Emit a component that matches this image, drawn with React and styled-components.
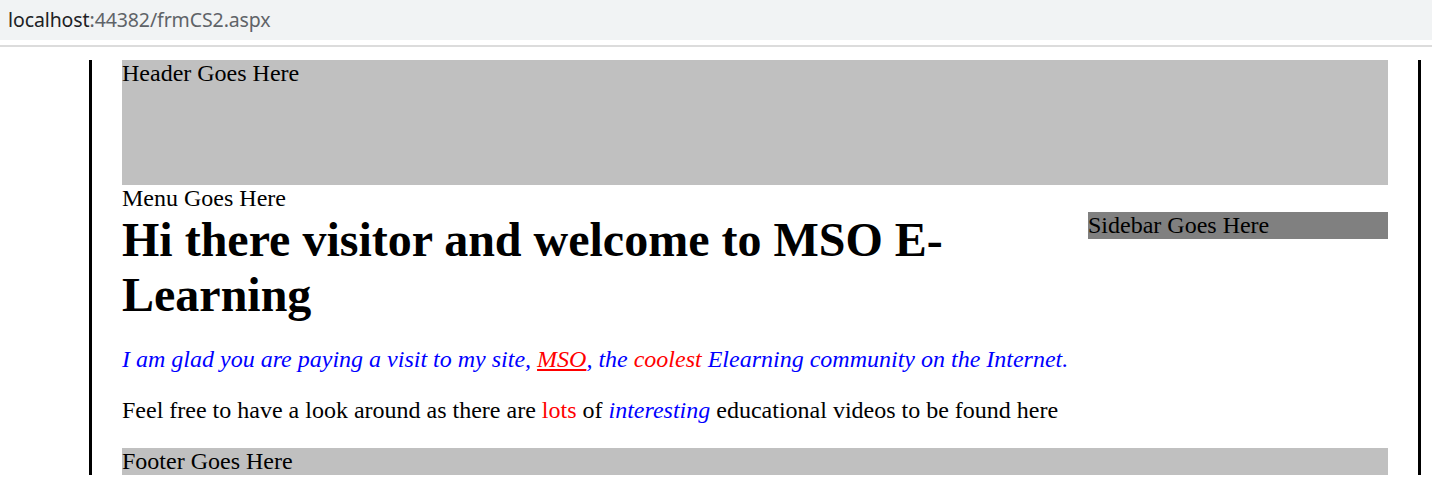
import React from "react";
import styled, { createGlobalStyle } from "styled-components";

const Global = createGlobalStyle`
  html, body { margin: 0; padding: 0; background: #ffffff; }
  body { font-family: "Liberation Serif", "Times New Roman", serif; font-size: 24px; color: #000; }
`;

const AddressBar = styled.div`
  height: 40px;
  background: #f1f3f4;
  display: flex;
  align-items: center;
  padding-left: 8px;
  padding-bottom: 1px;
  box-sizing: border-box;
  font-family: "Noto Sans", "Open Sans", sans-serif;
  font-size: 19.5px;
  letter-spacing: -0.1px;
  color: #202124;
`;

const UrlRest = styled.span`
  color: #5f6368;
`;

const BarRule = styled.div`
  margin-top: 5px;
  height: 2px;
  background: #dcdcdc;
`;

const Page = styled.div`
  margin: 13px 11px 0 89px;
  border-left: 3px solid #000;
  border-right: 3px solid #000;
  padding: 0 30px;
`;

const Block = styled.div`
  background: ${(p) => p.$bg || "transparent"};
  height: ${(p) => p.$h || "auto"};
`;

const ContentRow = styled.div`
  display: flex;
  align-items: flex-start;
`;

const Main = styled.div`
  flex: 1;
  min-width: 0;
`;

const Sidebar = styled.div`
  width: 300px;
  flex: none;
  background: #808080;
`;

const Title = styled.h1`
  margin: 0;
  font-size: 48px;
  font-weight: bold;
`;

const Para = styled.p`
  margin: 24px 0;
  font-style: ${(p) => (p.$italic ? "italic" : "normal")};
  color: ${(p) => p.$color || "#000"};
`;

const Tone = styled.span`
  color: ${(p) => p.$color};
  font-style: ${(p) => (p.$italic ? "italic" : "inherit")};
`;

const Link = styled.a`
  color: #ff0000;
  text-decoration: underline;
`;

export default function App() {
  return (
    <>
      <Global />
      <AddressBar>
        localhost<UrlRest>:44382/frmCS2.aspx</UrlRest>
      </AddressBar>
      <BarRule />
      <Page>
        <Block $bg="#c0c0c0" $h="125px">Header Goes Here</Block>
        <Block>Menu Goes Here</Block>
        <ContentRow>
          <Main>
            <Title>Hi there visitor and welcome to MSO E-Learning</Title>
            <Para $italic $color="#0000ff">
              I am glad you are paying a visit to my site, <Link href="#">MSO</Link>, the{" "}
              <Tone $color="#ff0000">coolest</Tone> Elearning community on the Internet.
            </Para>
            <Para>
              Feel free to have a look around as there are <Tone $color="#ff0000">lots</Tone> of{" "}
              <Tone $color="#0000ff" $italic>interesting</Tone> educational videos to be found here
            </Para>
          </Main>
          <Sidebar>Sidebar Goes Here</Sidebar>
        </ContentRow>
        <Block $bg="#c0c0c0">Footer Goes Here</Block>
      </Page>
    </>
  );
}
